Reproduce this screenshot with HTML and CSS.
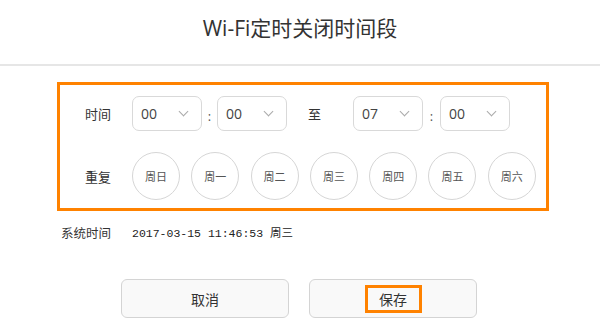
FILE: index.html
```html
<!DOCTYPE html>
<html lang="zh-CN">
  <head>
    <meta charset="UTF-8" />
    <meta name="viewport" content="width=device-width, initial-scale=1.0" />
    <title>Wi-Fi定时关闭时间段</title>
    <link rel="stylesheet" href="styles.css">
  </head>
  <body>
    <header class="dialog-head">
      <h1>Wi-Fi定时关闭时间段</h1>
    </header>

    <div class="schedule">
      <div class="row">
        <span class="label">时间</span>
        <div class="select">00<span class="caret"></span></div>
        <span class="colon">:</span>
        <div class="select">00<span class="caret"></span></div>
        <span class="to">至</span>
        <div class="select">07<span class="caret"></span></div>
        <span class="colon">:</span>
        <div class="select">00<span class="caret"></span></div>
      </div>

      <div class="row days-row">
        <span class="label">重复</span>
        <div class="days">
          <div class="day">周日</div>
          <div class="day">周一</div>
          <div class="day">周二</div>
          <div class="day">周三</div>
          <div class="day">周四</div>
          <div class="day">周五</div>
          <div class="day">周六</div>
        </div>
      </div>
    </div>

    <div class="sys-time">
      <span class="sys-label">系统时间</span>
      <span class="sys-value">2017-03-15 11:46:53 周三</span>
    </div>

    <div class="actions">
      <button class="btn">取消</button>
      <button class="btn"><span class="mark">保存</span></button>
    </div>
  </body>
</html>
```

FILE: styles.css
```css
body {
  margin: 0;
  padding: 0;
  background: #fff;
  font-family: "Open Sans", "Noto Sans CJK SC", sans-serif;
  color: #333;
}

.dialog-head {
  height: 64px;
  border-bottom: 2px solid #e6e6e6;
  display: flex;
  justify-content: center;
  align-items: center;
}

.dialog-head h1 {
  margin: 0;
  margin-top: -10px;
  font-size: 21px;
  font-weight: normal;
  color: #333;
}

/* orange highlighted block */
.schedule {
  box-sizing: border-box;
  width: 492px;
  height: 129px;
  margin: 16px 0 0 57px;
  border: 3px solid #ff8200;
  padding: 11px 0 0 25px;
}

.row {
  display: flex;
  align-items: center;
  height: 35px;
}

.label {
  width: 47px;
  font-size: 13px;
  color: #333;
}

.select {
  box-sizing: border-box;
  width: 70px;
  height: 35px;
  border: 1.5px solid #d9d9d9;
  border-radius: 7px;
  padding-left: 8px;
  display: flex;
  align-items: center;
  font-size: 14px;
  color: #444;
  position: relative;
}

.caret {
  position: absolute;
  right: 14px;
  top: 11px;
  width: 6px;
  height: 6px;
  border-right: 1.5px solid #aaa;
  border-bottom: 1.5px solid #aaa;
  transform: rotate(45deg);
}

.colon {
  width: 15px;
  text-align: center;
  font-size: 13px;
  color: #555;
  padding-top: 4px;
}

.colon:last-of-type {
  width: 17px;
}

.to {
  font-size: 13px;
  margin: 0 32px 0 21px;
  color: #333;
}

.days-row {
  margin-top: 21px;
  height: 48px;
}

.days {
  display: flex;
  gap: 11.3px;
}

.day {
  box-sizing: border-box;
  width: 48px;
  height: 48px;
  border: 1.5px solid #d6d6d6;
  border-radius: 50%;
  display: flex;
  justify-content: center;
  align-items: center;
  font-size: 11px;
  color: #555;
}

.sys-time {
  display: flex;
  align-items: center;
  margin: 12px 0 0 61px;
  height: 18px;
}

.sys-label {
  width: 71px;
  font-size: 12.5px;
  color: #333;
}

.sys-value {
  font-family: "Liberation Mono", "Noto Sans CJK SC", monospace;
  font-size: 11.5px;
  color: #222;
}

.actions {
  display: flex;
  gap: 20px;
  margin: 38px 0 0 121px;
}

.btn {
  box-sizing: border-box;
  width: 168px;
  height: 39px;
  border: 1.5px solid #d4d4d4;
  border-radius: 6px;
  background: #f9f9f9;
  font-family: "Noto Sans CJK SC", sans-serif;
  font-size: 14px;
  color: #333;
  display: flex;
  justify-content: center;
  align-items: center;
  padding: 0;
}

.mark {
  box-sizing: border-box;
  width: 57px;
  height: 28px;
  border: 3px solid #ff8200;
  display: flex;
  justify-content: center;
  align-items: center;
}
```
